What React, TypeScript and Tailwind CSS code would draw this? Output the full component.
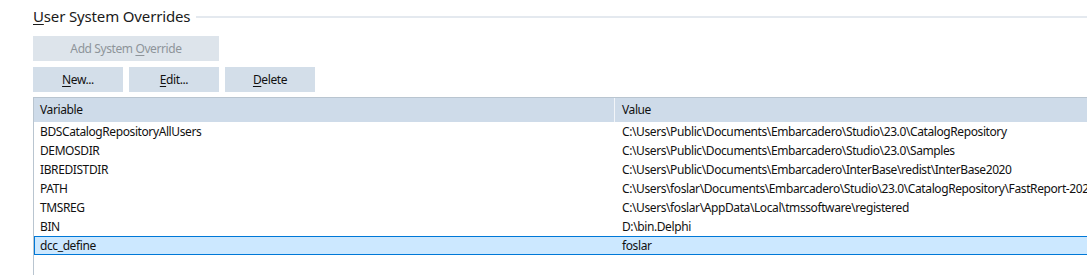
import React from "react";

const rows: [string, string][] = [
  ["BDSCatalogRepositoryAllUsers", "C:\\Users\\Public\\Documents\\Embarcadero\\Studio\\23.0\\CatalogRepository"],
  ["DEMOSDIR", "C:\\Users\\Public\\Documents\\Embarcadero\\Studio\\23.0\\Samples"],
  ["IBREDISTDIR", "C:\\Users\\Public\\Documents\\Embarcadero\\InterBase\\redist\\InterBase2020"],
  ["PATH", "C:\\Users\\foslar\\Documents\\Embarcadero\\Studio\\23.0\\CatalogRepository\\FastReport-2023.2\\Bin;C:\\Users"],
  ["TMSREG", "C:\\Users\\foslar\\AppData\\Local\\tmssoftware\\registered"],
  ["BIN", "D:\\bin.Delphi"],
  ["dcc_define", "foslar"],
];

function Btn({ pre, u, post, w, disabled }: { pre: string; u: string; post: string; w: string; disabled?: boolean }) {
  return (
    <div
      className={`${w} h-[25px] flex items-center justify-center text-[12px] tracking-[-0.4px] ${
        disabled ? "bg-[#dde4eb] text-[#8e949a]" : "bg-[#d3dee9] text-[#111]"
      }`}
    >
      <span>
        {pre}
        <span className="underline underline-offset-2">{u}</span>
        {post}
      </span>
    </div>
  );
}

export default function App() {
  return (
    <div
      className="w-[1087px] h-[275px] bg-white overflow-hidden"
      style={{ fontFamily: '"Noto Sans", "Open Sans", sans-serif' }}
    >
      <div className="pl-[33px] pt-[2px] flex flex-col">
        <div className="h-[29px] flex items-center">
          <span className="text-[15px] text-[#1a1a1a] leading-none tracking-[-0.15px]">
            <span className="underline underline-offset-2">U</span>ser System Overrides
          </span>
          <div className="flex-1 h-[2px] bg-[#e4e9ef] ml-[6px]" />
        </div>
        <div className="mt-[5px]">
          <Btn pre="Add System " u="O" post="verride" w="w-[186px]" disabled />
        </div>
        <div className="mt-[6px] flex gap-[6px]">
          <Btn pre="" u="N" post="ew..." w="w-[90px]" />
          <Btn pre="" u="E" post="dit..." w="w-[90px]" />
          <Btn pre="" u="D" post="elete" w="w-[90px]" />
        </div>
        <div className="mt-[5px] border-l border-t border-[#b9c5d0] h-[300px] text-[12px] text-[#111] tracking-[-0.4px]">
          <div className="flex h-[24px] bg-[#cedbe9] items-center">
            <div className="w-[580px] pl-[6px] h-full flex items-center">Variable</div>
            <div className="w-px h-full bg-[#f2f5f9]" />
            <div className="flex-1 pl-[7px] h-full flex items-center">Value</div>
          </div>
          {rows.map(([k, v], i) => {
            const sel = i === rows.length - 1;
            return (
              <div
                key={k}
                className={`flex h-[19px] items-center whitespace-nowrap overflow-hidden ${
                  sel ? "bg-[#cce8ff] border border-[#0078d7] border-r-0" : ""
                }`}
              >
                <div className={`${sel ? "w-[579px] pl-[5px]" : "w-[580px] pl-[6px]"} shrink-0`}>{k}</div>
                <div className="w-px shrink-0" />
                <div className="pl-[7px]">{v}</div>
              </div>
            );
          })}
        </div>
      </div>
    </div>
  );
}
